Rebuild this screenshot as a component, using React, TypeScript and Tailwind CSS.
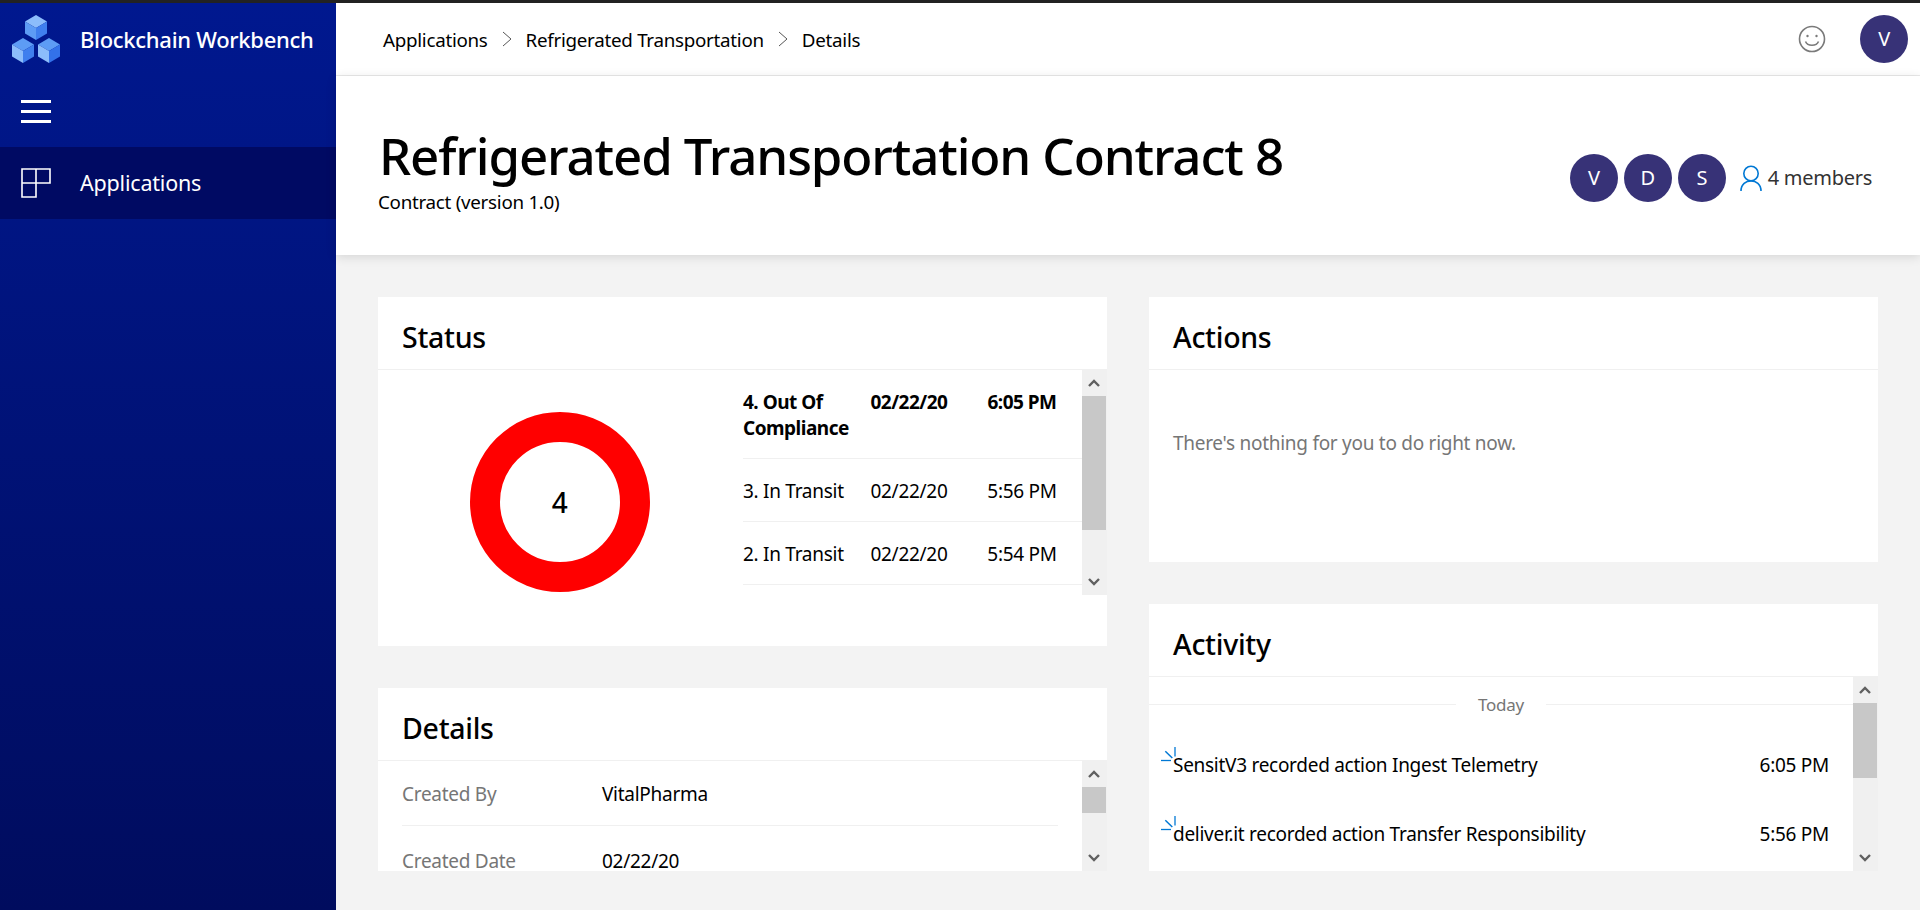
import React from "react";

function Avatar({ l, gray }: { l: string; gray?: boolean }) {
  return (
    <div className={`w-12 h-12 rounded-full flex items-center justify-center text-white text-[20px] ${gray ? "bg-[#69797e]" : "bg-[#373277]"}`}>
      {l}
    </div>
  );
}

function Scrollbar({ thumbH }: { thumbH: number }) {
  return (
    <div className="w-[25px] shrink-0 bg-[#f0f0f0] flex flex-col h-full">
      <div className="h-[26px] shrink-0 flex items-center justify-center pr-px">
        <svg width="12" height="8" viewBox="0 0 12 8"><path d="M1 7L6 2L11 7" fill="none" stroke="#606060" strokeWidth="2.4" /></svg>
      </div>
      <div className="flex-1 flex flex-col">
        <div className="bg-[#c8c8c8] w-6" style={{ height: thumbH }} />
      </div>
      <div className="h-[26px] shrink-0 flex items-center justify-center pr-px">
        <svg width="12" height="8" viewBox="0 0 12 8"><path d="M1 1L6 6L11 1" fill="none" stroke="#606060" strokeWidth="2.4" /></svg>
      </div>
    </div>
  );
}

function Logo() {
  const Cube = ({ x, y, a, b, c }: { x: number; y: number; a: string; b: string; c: string }) => (
    <g transform={`translate(${x} ${y})`}>
      <path d="M11 0L22 6.5L11 13L0 6.5Z" fill={a} />
      <path d="M0 6.5L11 13V25L0 18.5Z" fill={b} />
      <path d="M22 6.5L11 13V25L22 18.5Z" fill={c} />
    </g>
  );
  return (
    <svg width="48" height="48" viewBox="0 0 48 48">
      <Cube x={13} y={0} a="#8cbdfb" b="#5d9cf5" c="#3f7fee" />
      <Cube x={0} y={23} a="#5d9cf5" b="#8cbdfb" c="#3f7fee" />
      <Cube x={26} y={23} a="#5d9cf5" b="#8cbdfb" c="#3372ea" />
    </svg>
  );
}

function Chevron() {
  return (
    <svg width="10" height="16" viewBox="0 0 10 16" className="mx-[14px]"><path d="M1 1L9 8L1 15" fill="none" stroke="#555" strokeWidth="1" /></svg>
  );
}

function Spinner() {
  return (
    <svg width="15" height="15" viewBox="0 0 15 15" className="absolute left-[-12px] top-[-4px]">
      <path d="M0 13.5H10" stroke="#0078d4" strokeWidth="1.3" />
      <path d="M4.3 4.3L11.3 11" stroke="#0078d4" strokeWidth="1.5" />
      <path d="M14 0V9.5" stroke="#0078d4" strokeWidth="1.3" />
    </svg>
  );
}

function StatusRow({ name, date, time, bold, h }: { name: string; date: string; time: string; bold?: boolean; h: string }) {
  return (
    <div className={`flex border-b border-[#f0f0f0] ${h} ${bold ? "font-bold items-start pt-[19px] tracking-[-0.5px]" : "items-center pt-[2px]"}`}>
      <div className="w-[116px] leading-[26px]">{name}</div>
      <div className="w-[100px] text-center leading-[26px]">{date}</div>
      <div className="w-[120px] pl-[6px] text-center leading-[26px]">{time}</div>
    </div>
  );
}

function CardTitle({ t }: { t: string }) {
  return (
    <div className="h-[73px] shrink-0 border-b border-[#f0f0f0] px-6 flex items-center pt-[9px] text-[28.5px] font-medium text-black">{t}</div>
  );
}

export default function App() {
  return (
    <div className="h-screen overflow-hidden flex flex-col border-t-[3px] border-[#222] text-[19px] text-black [font-family:'Noto_Sans',sans-serif] tracking-[-0.28px]">
      <div className="flex flex-1 min-h-0">
        <aside className="w-[336px] shrink-0 bg-linear-to-b from-[#00188f] to-[#000c5e] text-white flex flex-col">
          <div className="h-[72px] flex items-center pl-[12px] shrink-0">
            <Logo />
            <span className="ml-[20px] text-[22px] font-medium tracking-[-0.3px]">Blockchain Workbench</span>
          </div>
          <div className="h-[72px] flex items-center pl-[21px] shrink-0">
            <div className="w-[30px] flex flex-col gap-[7px]">
              <div className="h-[3px] bg-white" />
              <div className="h-[3px] bg-white" />
              <div className="h-[3px] bg-white" />
            </div>
          </div>
          <div className="h-[72px] bg-[#000a63] flex items-center pl-[21px] shrink-0">
            <svg width="30" height="30" viewBox="0 0 30 30">
              <path d="M1 1H15V29H1ZM1 15H29V1H15M1 15H15" fill="none" stroke="#fff" strokeWidth="1.6" />
            </svg>
            <span className="ml-[29px] text-[21.5px] tracking-[-0.2px] pt-px">Applications</span>
          </div>
        </aside>
        <main className="flex-1 min-w-0 bg-[#f3f3f3] flex flex-col">
          <header className="h-[73px] shrink-0 bg-white border-b border-[#eaeaea] flex items-center pl-[47px] pr-[12px]">
            <span className="text-[18.8px] pt-[2px]">Applications</span>
            <Chevron />
            <span className="text-[18.8px] pt-[2px]">Refrigerated Transportation</span>
            <Chevron />
            <span className="text-[18.8px] pt-[2px]">Details</span>
            <div className="ml-auto flex items-center gap-[34px]">
              <svg width="28" height="28" viewBox="0 0 28 28" fill="none" stroke="#7a7a7a" strokeWidth="1.6">
                <circle cx="14" cy="14" r="12.5" />
                <circle cx="9.5" cy="11" r="1.2" fill="#7a7a7a" stroke="none" />
                <circle cx="18.5" cy="11" r="1.2" fill="#7a7a7a" stroke="none" />
                <path d="M7.5 16.5C9.5 21.5 18.5 21.5 20.5 16.5" />
              </svg>
              <Avatar l="V" />
            </div>
          </header>
          <section className="h-[179px] shrink-0 bg-white shadow-[0_2px_10px_rgba(0,0,0,0.12)] flex items-center pl-[43px] pr-[48px] relative">
            <div className="pt-[7px]">
              <h1 className="text-[51px] leading-[62px] font-medium text-black tracking-[-1.12px]">Refrigerated Transportation Contract 8</h1>
              <div className="leading-[26px] mt-[3px] text-[18.8px] -ml-px">Contract (version 1.0)</div>
            </div>
            <div className="ml-auto flex items-center gap-[6px] pt-[24px]">
              <Avatar l="V" />
              <Avatar l="D" />
              <Avatar l="S" />
              <svg width="24" height="28" viewBox="0 0 24 28" fill="none" stroke="#0078d4" strokeWidth="1.6" className="ml-[7px] mr-[-1px]">
                <circle cx="12" cy="9.5" r="7.2" />
                <path d="M2 27C2 13.5 22 13.5 22 27" />
              </svg>
              <span className="text-[#333] text-[20px] pt-px">4 members</span>
            </div>
          </section>
          <div className="flex-1 min-h-0 grid grid-cols-[729px_729px] gap-x-[42px] pl-[42px] pt-[42px] overflow-hidden">
            <div className="flex flex-col gap-[42px] h-[574px]">
              <div className="bg-white h-[349px] flex flex-col shrink-0">
                <CardTitle t="Status" />
                <div className="flex h-[225px] relative">
                  <div className="w-[365px] shrink-0 flex items-center justify-center pt-[38px] pr-[2px]">
                    <div className="w-[180px] h-[180px] rounded-full border-[30px] border-[#ff0000] flex items-center justify-center text-[28px] font-medium">4</div>
                  </div>
                  <div className="flex-1 min-w-0">
                    <StatusRow name="4. Out Of Compliance" date="02/22/20" time="6:05 PM" bold h="h-[89px]" />
                    <StatusRow name="3. In Transit" date="02/22/20" time="5:56 PM" h="h-[63px]" />
                    <StatusRow name="2. In Transit" date="02/22/20" time="5:54 PM" h="h-[63px]" />
                  </div>
                  <Scrollbar thumbH={134} />
                </div>
              </div>
              <div className="bg-white flex-1 min-h-0 flex flex-col overflow-hidden">
                <CardTitle t="Details" />
                <div className="flex flex-1 min-h-0">
                  <div className="flex-1 min-w-0 px-6 pt-[2px] overflow-hidden">
                    <div className="flex h-[63px] items-center border-b border-[#f0f0f0] pt-px">
                      <span className="w-[200px] text-[#767676]">Created By</span>
                      <span>VitalPharma</span>
                    </div>
                    <div className="flex h-[70px] items-center">
                      <span className="w-[200px] text-[#767676]">Created Date</span>
                      <span>02/22/20</span>
                    </div>
                  </div>
                  <Scrollbar thumbH={26} />
                </div>
              </div>
            </div>
            <div className="flex flex-col gap-[42px] h-[574px]">
              <div className="bg-white h-[265px] shrink-0 flex flex-col">
                <CardTitle t="Actions" />
                <div className="px-6 pt-[59px] text-[#767676]">There's nothing for you to do right now.</div>
              </div>
              <div className="bg-white flex-1 min-h-0 flex flex-col overflow-hidden">
                <CardTitle t="Activity" />
                <div className="flex flex-1 min-h-0">
                  <div className="flex-1 min-w-0">
                    <div className="flex items-center h-[55px]">
                      <div className="flex-1 border-t border-[#f0f0f0]" />
                      <span className="px-[22px] text-[17px] text-[#767676]">Today</span>
                      <div className="flex-1 border-t border-[#f0f0f0]" />
                    </div>
                    <div className="flex items-center h-[67px] px-6 pb-px">
                      <div className="relative flex-1"><Spinner /><span>SensitV3 recorded action Ingest Telemetry</span></div>
                      <span>6:05 PM</span>
                    </div>
                    <div className="flex items-center h-[70px] px-6">
                      <div className="relative flex-1"><Spinner /><span>deliver.it recorded action Transfer Responsibility</span></div>
                      <span>5:56 PM</span>
                    </div>
                  </div>
                  <Scrollbar thumbH={75} />
                </div>
              </div>
            </div>
          </div>
        </main>
      </div>
    </div>
  );
}
